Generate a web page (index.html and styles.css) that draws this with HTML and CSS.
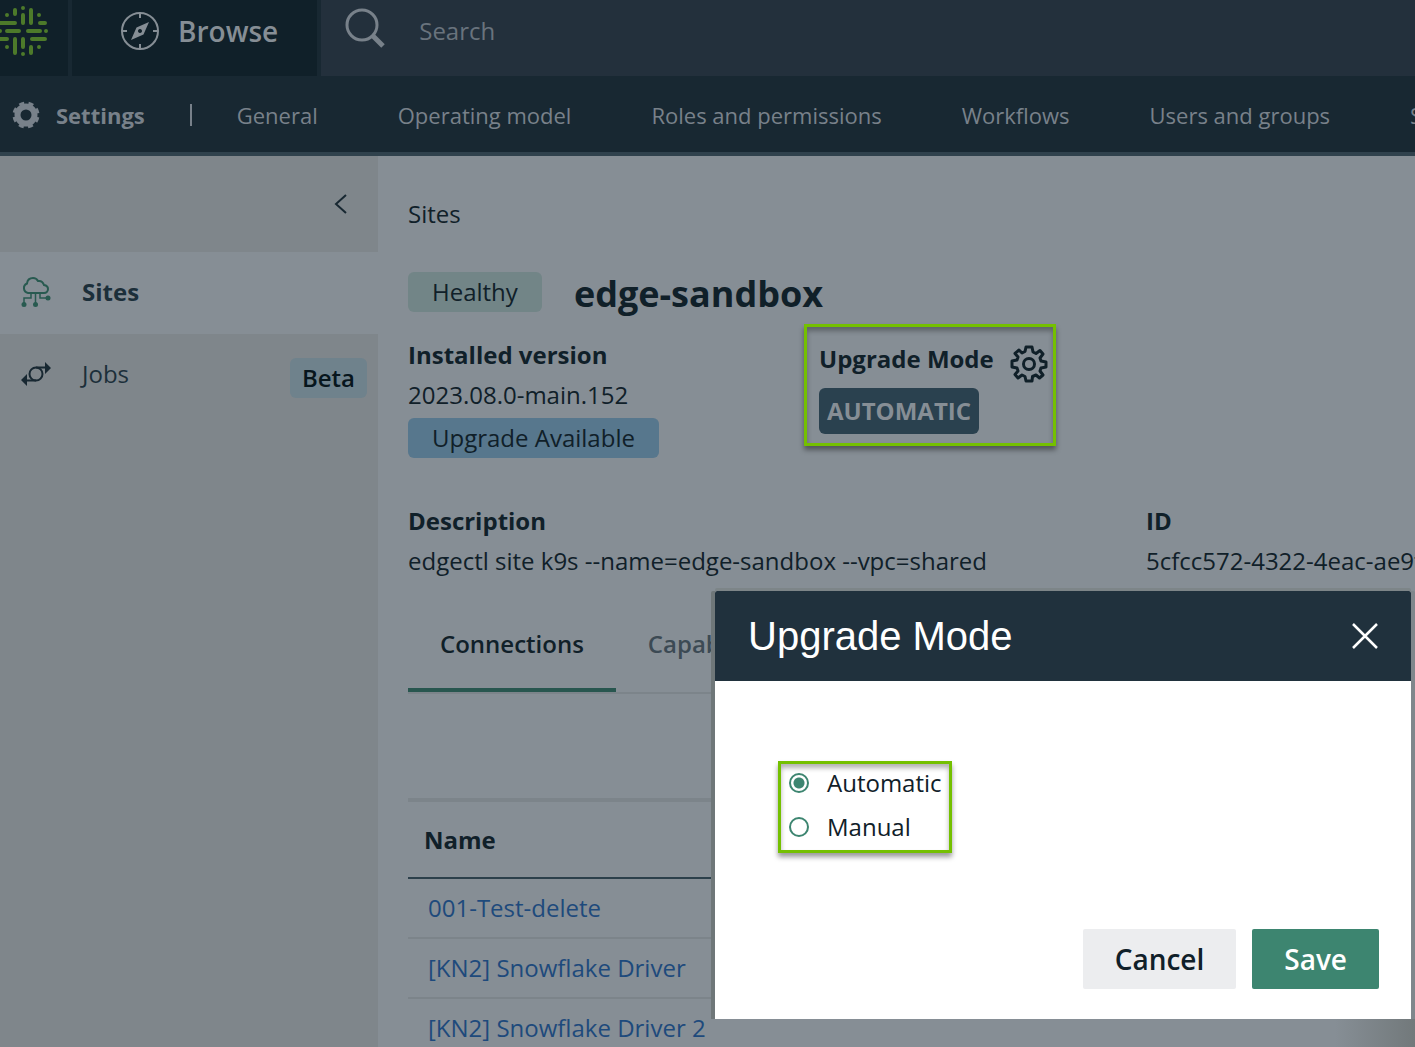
FILE: index.html
```html
<!DOCTYPE html>
<html lang="en">
<head>
    <meta charset="UTF-8">
    <meta name="viewport" content="width=device-width, initial-scale=1.0">
    <title>edge-sandbox - Sites</title>
    <link rel="stylesheet" href="styles.css">
</head>
<body>
    <header class="topbar">
        <a class="logo" href="#" aria-label="Home">
            <svg width="50" height="52" viewBox="-1 5 50 52" fill="none" stroke="#4d7a2a" stroke-width="4" stroke-linecap="round">
                <path d="M14 10v4M22 15v8M30 10v13M-2 23h16M39 23h5M-4 31h3M6 31h12M27 31h12M45 31h0M-2 39h8M31 39h13M14 39v14M22 39v8M30 47v6M22 8h0M22 54h0M6 15h0M38 15h0M6 47h0M38 47h0"/>
            </svg>
        </a>
        <button class="browse" type="button">
            <svg width="40" height="40" viewBox="0 0 40 40" fill="none" stroke="#868e95" stroke-width="2">
                <circle cx="20" cy="20" r="18"/>
                <path d="M20 2v5M20 33v5M2 20h5M33 20h5"/>
                <path fill="#868e95" stroke="none" fill-rule="evenodd" d="M29 11L23.500 23.500L11 29L16.500 16.500ZM20 18a2 2 0 1 0 .01 0Z"/>
            </svg>
            <span>Browse</span>
        </button>
        <label class="search">
            <svg width="42" height="46" viewBox="0 0 42 46" fill="none" stroke="#78818a">
                <circle cx="17" cy="17" r="15" stroke-width="3"/>
                <path d="M28 28L38 38" stroke-width="5"/>
            </svg>
            <input type="text" placeholder="Search" aria-label="Search">
        </label>
    </header>

    <nav class="settings-nav">
        <svg class="cog" width="28" height="28" viewBox="0 0 28 28">
            <circle cx="14" cy="14" r="8.500" fill="none" stroke="#78818a" stroke-width="6"/>
            <circle cx="14" cy="14" r="12" fill="none" stroke="#78818a" stroke-width="3" stroke-dasharray="5 4.425" stroke-dashoffset="-2.200"/>
        </svg>
        <strong>Settings</strong>
        <span class="divider"></span>
        <a href="#">General</a>
        <a href="#">Operating model</a>
        <a href="#">Roles and permissions</a>
        <a href="#">Workflows</a>
        <a href="#">Users and groups</a>
        <a href="#">Services</a>
    </nav>

    <div class="layout">
        <aside class="sidebar">
            <button class="collapse" type="button" aria-label="Collapse">
                <svg width="14" height="20" viewBox="0 0 14 20" fill="none" stroke="#182832" stroke-width="2">
                    <path d="M13 1L3 10L13 19"/>
                </svg>
            </button>
            <a class="side-item active" href="#">
                <svg width="30" height="32" viewBox="0 0 30 32" fill="none" stroke="#285a50" stroke-width="2">
                    <path d="M7 17a5 5 0 0 1-1-9.500C6.500 3.500 9 2 12 2c2.500 0 4 1 5 3c3-.5 5 1 6 4c3 .5 4 2 4 4s-1.500 4-4 4Z"/>
                    <path stroke-width="1.500" d="M10 17v5H3v6M14.500 17v11M19 17v5h7"/>
                    <g fill="#285a50" stroke="none"><circle cx="3" cy="28.500" r="2.500"/><circle cx="14.500" cy="28.500" r="2.500"/><circle cx="27" cy="22" r="2.500"/></g>
                </svg>
                <span>Sites</span>
            </a>
            <a class="side-item" href="#">
                <svg width="30" height="24" viewBox="0 0 30 24" fill="none" stroke="#182832" stroke-width="2">
                    <circle cx="15" cy="12" r="6.500"/>
                    <path d="M15 5.500H25M5 18.500H15"/>
                    <path fill="#182832" stroke="none" d="M24 0L30 6L24 12ZM6 12L0 18L6 24Z"/>
                </svg>
                <span>Jobs</span>
                <span class="beta">Beta</span>
            </a>
        </aside>

        <main class="content">
            <a class="breadcrumb" href="#">Sites</a>
            <div class="title-row">
                <span class="tag healthy">Healthy</span>
                <h1>edge-sandbox</h1>
            </div>

            <div class="info-row">
                <div class="version">
                    <h2>Installed version</h2>
                    <p>2023.08.0-main.152</p>
                    <span class="tag upgrade">Upgrade Available</span>
                </div>
                <div class="mode highlight">
                    <div>
                        <h2>Upgrade Mode</h2>
                        <span class="mode-value">AUTOMATIC</span>
                    </div>
                    <button type="button" aria-label="Edit upgrade mode">
                        <svg width="38" height="38" viewBox="0 0 38 38" fill="none" stroke="#102029" stroke-width="3" stroke-linejoin="round">
                            <circle cx="19" cy="19" r="5.500"/>
                            <path d="M16 2H22L23 7L26 8.500L30 5.500L33 9L30 13L31 16L36 17V22L31 23L30 26L33 30L29.500 33L26 30L22.500 31.500L22 36H16L15 31.500L12 30L8 33L5 29.500L8 26L7 23L2 22V16L7 15L8 12L5 8.500L9 5L12 8L15 6.500Z"/>
                        </svg>
                    </button>
                </div>
            </div>

            <div class="detail-row">
                <div class="description">
                    <h2>Description</h2>
                    <p>edgectl site k9s --name=edge-sandbox --vpc=shared</p>
                </div>
                <div class="site-id">
                    <h2>ID</h2>
                    <p>5cfcc572-4322-4eac-ae9f</p>
                </div>
            </div>

            <div class="tabs">
                <button class="tab selected" type="button">Connections</button>
                <button class="tab" type="button">Capabilities</button>
            </div>

            <table class="connections">
                <thead>
                    <tr><th scope="col">Name</th></tr>
                </thead>
                <tbody>
                    <tr><td><a href="#">001-Test-delete</a></td></tr>
                    <tr><td><a href="#">[KN2] Snowflake Driver</a></td></tr>
                    <tr><td><a href="#">[KN2] Snowflake Driver 2</a></td></tr>
                </tbody>
            </table>
        </main>
    </div>

    <form class="modal" role="dialog" aria-labelledby="modal-title">
        <div class="modal-header">
            <h2 id="modal-title">Upgrade Mode</h2>
            <button type="button" aria-label="Close">
                <svg width="26" height="26" viewBox="0 0 26 26" fill="none" stroke="#fff" stroke-width="2.500">
                    <path d="M1 1L25 25M25 1L1 25"/>
                </svg>
            </button>
        </div>
        <div class="modal-body">
            <div class="options highlight">
                <label><input type="radio" name="mode" checked>Automatic</label>
                <label><input type="radio" name="mode">Manual</label>
            </div>
        </div>
        <div class="modal-footer">
            <button class="cancel" type="button">Cancel</button>
            <button class="save" type="submit">Save</button>
        </div>
    </form>
</body>
</html>
```

FILE: styles.css
```css
:root {
    --ink: #102029;
    --nav: #182832;
    --page: #868e95;
    --sidebar: #7f868b;
    --muted: #78818a;
    --line: #7c848a;
    --link: #1e4a7c;
    --highlight: #74c000;
    --green: #3d8570;
}
* {
    box-sizing: border-box;
}
body {
    margin: 0;
    height: 100vh;
    overflow: hidden;
    position: relative;
    display: flex;
    flex-direction: column;
    background-color: var(--page);
    color: var(--ink);
    font-family: "Open Sans", "Noto Sans", sans-serif;
    font-size: 24px;
    line-height: 40px;
}
h1, h2, p {
    margin: 0;
}
h2 {
    font-size: 24px;
}
a {
    color: inherit;
    text-decoration: none;
}
button {
    padding: 0;
    border: 0;
    background: none;
    color: inherit;
    font: inherit;
    cursor: pointer;
}
svg {
    display: block;
    flex: none;
}
.highlight {
    border: 3px solid var(--highlight);
    box-shadow: 0 4px 5px rgba(0, 0, 0, 0.4), inset 0 4px 5px rgba(0, 0, 0, 0.3);
}

/* top bar */
.topbar {
    display: flex;
    flex: none;
    gap: 4px;
    height: 76px;
    background-color: var(--nav);
}
.logo {
    width: 68px;
    padding-top: 5px;
    background-color: var(--ink);
}
.browse {
    display: flex;
    align-items: center;
    gap: 18px;
    padding: 0 39px 14px 48px;
    background-color: var(--ink);
    color: var(--page);
    font-size: 28px;
    font-weight: 600;
}
.search {
    display: flex;
    flex: 1;
    align-items: center;
    gap: 32px;
    padding: 0 24px 14px;
    background-color: #23303c;
}
.search input {
    flex: 1;
    padding: 0;
    border: 0;
    background: none;
    color: var(--muted);
    font: inherit;
}
.search input::placeholder {
    color: #69737d;
}

/* settings navigation */
.settings-nav {
    display: flex;
    flex: none;
    align-items: center;
    height: 80px;
    padding: 2px 0 0 12px;
    overflow: hidden;
    border-bottom: 4px solid #30424d;
    background-color: var(--nav);
    color: var(--muted);
    font-size: 22px;
    white-space: nowrap;
}
.settings-nav strong {
    margin-left: 16px;
}
.divider {
    flex: none;
    width: 2px;
    height: 22px;
    margin: 0 45px;
    background-color: var(--muted);
}
.settings-nav a {
    margin-right: 80px;
}

.layout {
    display: flex;
    flex: 1;
    min-height: 0;
}

/* sidebar */
.sidebar {
    flex: none;
    width: 378px;
    background-color: var(--sidebar);
}
.collapse {
    display: flex;
    align-items: center;
    justify-content: flex-end;
    width: 100%;
    height: 96px;
    padding-right: 31px;
}
.side-item {
    display: flex;
    align-items: center;
    gap: 31px;
    height: 82px;
    padding: 0 11px 2px 21px;
    color: #1c2f3a;
}
.side-item.active {
    background-color: var(--page);
    font-weight: 700;
}
.beta {
    margin: 8px 0 0 auto;
    padding: 0 12px;
    border-radius: 6px;
    background-color: #6f828c;
    color: #07161d;
    font-weight: 600;
}

/* site details */
.content {
    flex: 1;
    min-width: 0;
    padding: 38px 0 0 30px;
    background: linear-gradient(to right, var(--page), #72797b) no-repeat right bottom / 80px 28px;
    white-space: nowrap;
}
.breadcrumb {
    display: block;
}
.title-row {
    display: flex;
    align-items: center;
    gap: 32px;
    height: 40px;
    margin-top: 38px;
}
h1 {
    padding-top: 4px;
    font-size: 36px;
}
.tag {
    display: inline-block;
    padding: 0 24px;
    border-radius: 6px;
}
.healthy {
    background-color: #728587;
}
.upgrade {
    margin-top: 3px;
    background-color: #57778d;
}
.info-row {
    display: flex;
    align-items: flex-start;
    margin-top: 12px;
}
.version {
    width: 396px;
    padding-top: 11px;
}
.mode {
    display: flex;
    gap: 16px;
    height: 122px;
    padding: 12px 5px 0 12px;
}
.mode button {
    align-self: flex-start;
    margin-top: 6px;
}
.mode-value {
    display: inline-block;
    margin-top: 9px;
    padding: 3px 8px;
    border-radius: 6px;
    background-color: #2a414f;
    color: var(--page);
    font-weight: 700;
}
.detail-row {
    display: flex;
    margin-top: 43px;
}
.description {
    flex: none;
    width: 738px;
}
.tabs {
    display: flex;
    margin-top: 17px;
    border-bottom: 2px solid var(--line);
}
.tab {
    height: 94px;
    padding: 2px 32px 0;
    border-bottom: 4px solid transparent;
    color: #3c4a54;
    font-weight: 600;
}
.tab.selected {
    border-color: #28564f;
    color: var(--ink);
}
.connections {
    width: 100%;
    margin-top: 104px;
    border-collapse: collapse;
    border-top: 4px solid var(--line);
    text-align: left;
}
.connections th {
    height: 78px;
    padding: 0 16px;
    border-bottom: 2px solid #2c404b;
}
.connections td {
    height: 60px;
    padding: 0 20px;
    border-bottom: 2px solid var(--line);
    color: var(--link);
}

/* upgrade mode dialog */
.modal {
    position: absolute;
    top: 591px;
    right: 4px;
    width: 696px;
    border-radius: 2px 2px 0 0;
    background-color: #fff;
    box-shadow: -4px 0 #6f7779, 0 -3px #7d8588, 4px 0 #7f878c;
}
.modal-header {
    display: flex;
    align-items: center;
    justify-content: space-between;
    height: 90px;
    padding: 0 33px;
    border-radius: 2px 2px 0 0;
    background-color: #20313d;
    color: #fff;
}
.modal-header h2 {
    font-family: "Liberation Sans", Arial, sans-serif;
    font-size: 40px;
    font-weight: 400;
}
.modal-body {
    padding: 80px 63px 0;
}
.options {
    display: flex;
    flex-direction: column;
    gap: 4px;
    width: fit-content;
    padding: 0 7px 2px 8px;
}
.options label {
    display: flex;
    align-items: center;
    gap: 18px;
    height: 40px;
    padding-bottom: 2px;
}
.options input {
    appearance: none;
    width: 20px;
    height: 20px;
    margin: 0;
    border: 2px solid var(--green);
    border-radius: 50%;
}
.options input:checked {
    background: radial-gradient(var(--green) 5px, transparent 6px);
}
.modal-footer {
    display: flex;
    justify-content: flex-end;
    gap: 16px;
    padding: 76px 32px 30px;
}
.modal-footer button {
    height: 60px;
    padding: 0 32px;
    border-radius: 2px;
    font-size: 28px;
    font-weight: 600;
}
.cancel {
    background-color: #ecedef;
}
.save {
    background-color: var(--green);
    color: #fff;
}
```
